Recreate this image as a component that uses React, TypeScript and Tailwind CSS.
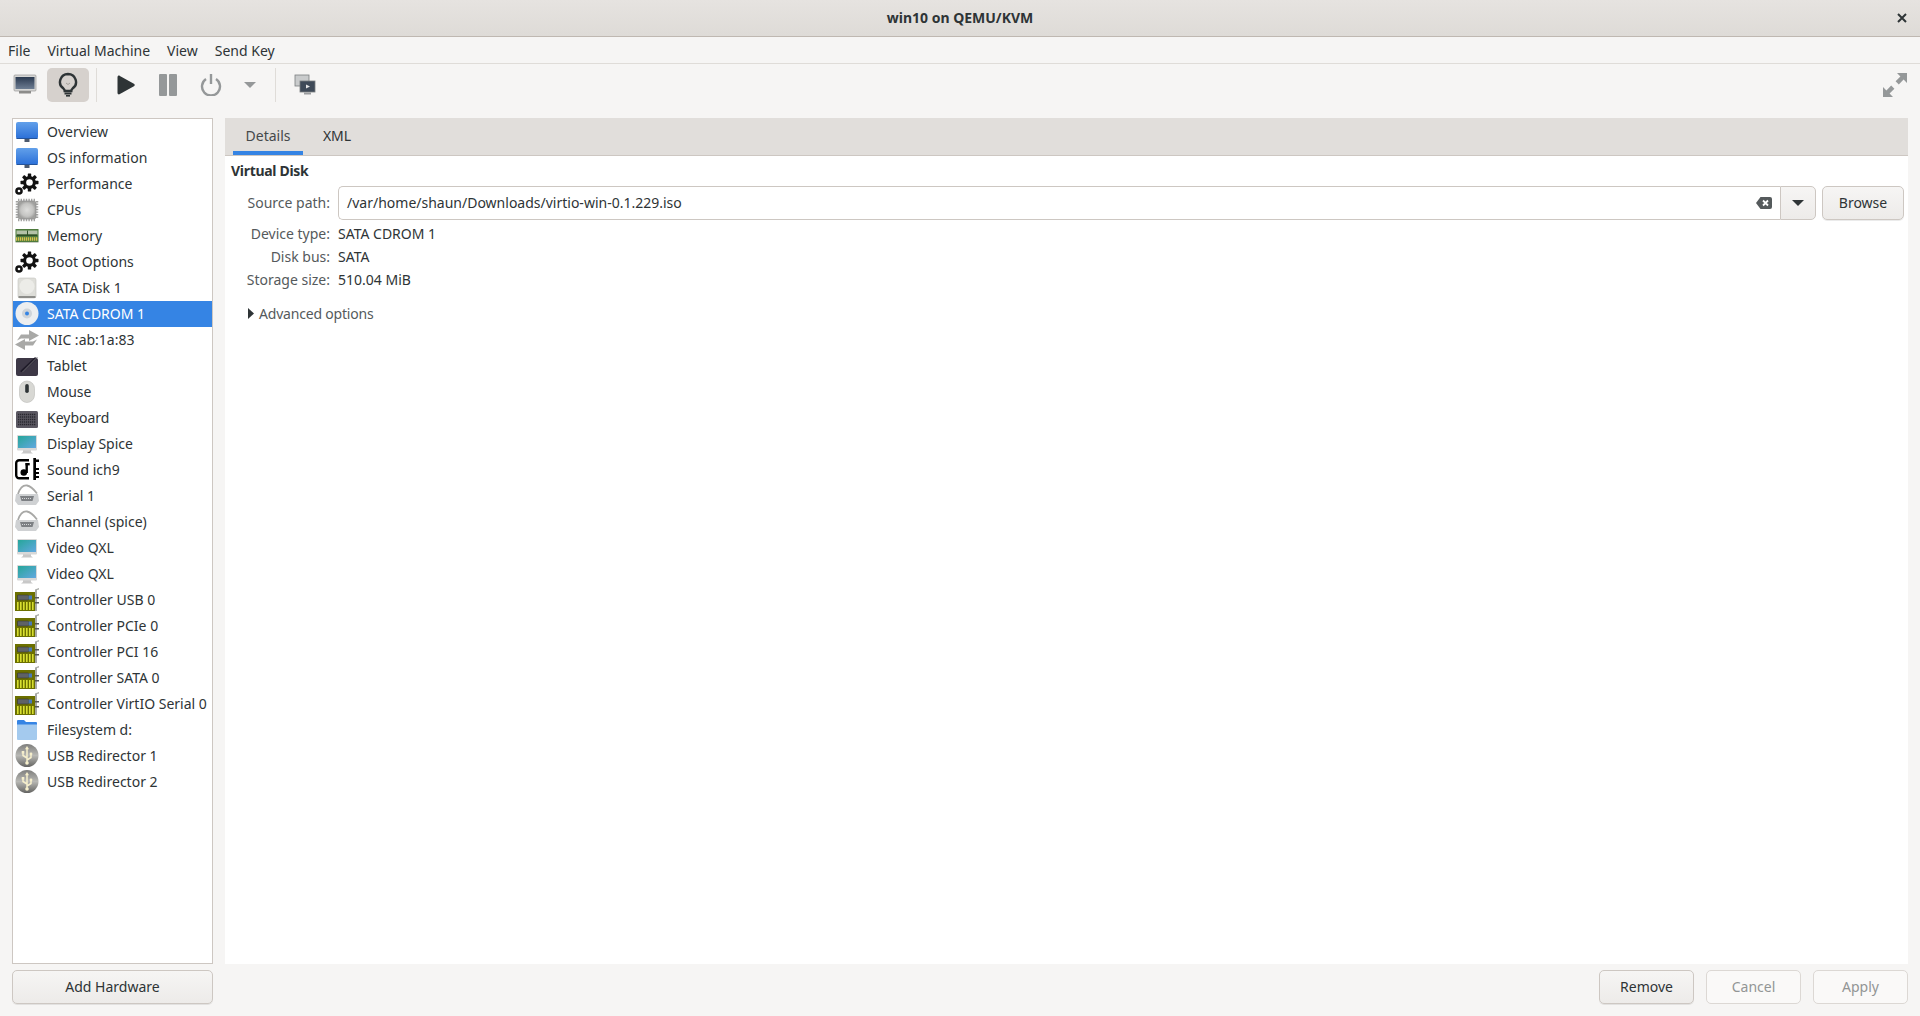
import React from 'react';

const Monitor = () => (
  <svg width="24" height="24" viewBox="0 0 24 24">
    <defs>
      <linearGradient id="blueScreen" x1="0" y1="0" x2="0" y2="1">
        <stop offset="0" stopColor="#62a0ea" />
        <stop offset="1" stopColor="#2a6fd8" />
      </linearGradient>
    </defs>
    <rect x="9.500" y="18" width="5" height="4" fill="#4d5a6e" />
    <rect x="1" y="2" width="22" height="17" rx="2" fill="url(#blueScreen)" />
    <rect x="1.500" y="18" width="21" height="1" fill="#24549c" />
  </svg>
);

const Gears = () => (
  <svg width="24" height="24" viewBox="0 0 24 24">
    <g fill="#111">
      <circle cx="14.500" cy="10.500" r="6.400" />
      {[0, 45, 90, 135].map((a) => (
        <rect key={a} x="12.800" y="1.500" width="3.400" height="18" rx="0.600" transform={`rotate(${a} 14.500 10.500)`} />
      ))}
      <circle cx="4" cy="19" r="3.800" />
    </g>
    <circle cx="14.500" cy="10.500" r="3.300" fill="#fff" />
    <circle cx="4" cy="19" r="1.300" fill="#fff" />
  </svg>
);

const Chip = () => (
  <svg width="24" height="24" viewBox="0 0 24 24">
    <defs>
      <radialGradient id="chip">
        <stop offset="0" stopColor="#dededc" />
        <stop offset="0.700" stopColor="#c4c4c2" />
        <stop offset="1" stopColor="#a0a09e" />
      </radialGradient>
    </defs>
    <g stroke="#a2a2a0" strokeWidth="2.500" strokeDasharray="1.400 1.200">
      <line x1="3" x2="21" y1="2" y2="2" />
      <line x1="3" x2="21" y1="22" y2="22" />
      <line x1="2" x2="2" y1="3" y2="21" />
      <line x1="22" x2="22" y1="3" y2="21" />
    </g>
    <rect x="3" y="3" width="18" height="18" rx="2.500" fill="url(#chip)" stroke="#8e8e8c" strokeWidth="0.700" />
  </svg>
);

const Ram = () => (
  <svg width="24" height="24" viewBox="0 0 24 24">
    <rect x="0.500" y="5" width="23" height="13" fill="#4d7a3c" />
    <rect x="1.500" y="6.500" width="21" height="4" fill="#b4c2a8" />
    <rect x="2" y="10.500" width="20" height="1.500" fill="#2f4f28" />
    <rect x="12" y="6.500" width="1" height="5" fill="#2f4f28" />
    <line x1="1" x2="23" y1="15" y2="15" stroke="#d8c24e" strokeWidth="3.400" strokeDasharray="1.300 0.700" />
    <rect x="0.500" y="18" width="23" height="1" fill="#c8ccc2" />
  </svg>
);

const HardDisk = () => (
  <svg width="24" height="24" viewBox="0 0 24 24">
    <rect x="3" y="2" width="18" height="20" rx="2" fill="#deded9" stroke="#c4c4c0" strokeWidth="0.600" />
    <circle cx="12" cy="10.500" r="7.500" fill="#ecece8" />
    <rect x="3.500" y="20" width="17" height="2" rx="0.500" fill="#8e8e8a" />
  </svg>
);

const Cdrom = () => (
  <svg width="24" height="24" viewBox="0 0 24 24">
    <circle cx="12" cy="11.500" r="11.500" fill="#eceef0" />
    <circle cx="12" cy="11.500" r="5" fill="#cfd4d9" />
    <circle cx="12" cy="11.500" r="2" fill="#3584e4" />
  </svg>
);

const Nic = () => (
  <svg width="24" height="24" viewBox="0 0 24 24" fill="#a9a9a7">
    <path d="M2 12.500 6 6.500h8V2l10 5.500L14 13v-2.500H6z" />
    <path d="M22 11.500l-4 6h-8V22L0 16.500 10 11v2.500h8z" />
  </svg>
);

const Tablet = () => (
  <svg width="24" height="24" viewBox="0 0 24 24">
    <rect x="1" y="4" width="22" height="18" rx="2" fill="#3d3846" />
    <path d="M6 18 21 4" stroke="#1f1b29" strokeWidth="2.600" />
    <path d="M7 18.500 22.500 3" stroke="#77767b" strokeWidth="0.900" />
  </svg>
);

const Mouse = () => (
  <svg width="24" height="24" viewBox="0 0 24 24">
    <rect x="4.500" y="1" width="15" height="21.500" rx="7.500" fill="#d8d8d4" stroke="#bcbcb8" strokeWidth="0.600" />
    <rect x="10.200" y="4" width="3.600" height="9" rx="1.800" fill="#2e3436" />
  </svg>
);

const Keyboard = () => (
  <svg width="24" height="24" viewBox="0 0 24 24">
    <rect x="1" y="5" width="22" height="17" rx="1.500" fill="#5b5862" />
    {[8.500, 11, 13.500, 16, 18.500].map((y) => (
      <line key={y} x1="3" x2="21" y1={y} y2={y} stroke="#2a2830" strokeWidth="1.600" strokeDasharray="1.300 0.700" />
    ))}
  </svg>
);

const Display = () => (
  <svg width="24" height="24" viewBox="0 0 24 24">
    <defs>
      <linearGradient id="teal" x1="0" y1="0" x2="1" y2="1">
        <stop offset="0" stopColor="#26a69a" />
        <stop offset="1" stopColor="#62a8e0" />
      </linearGradient>
    </defs>
    <path d="M8 17h8v3l2 1.500H6L8 20z" fill="#c8c8c8" />
    <rect x="2" y="3" width="20" height="15.500" rx="1" fill="#d8d8d8" />
    <rect x="3" y="4" width="18" height="12" fill="url(#teal)" />
  </svg>
);

const Sound = () => (
  <svg width="24" height="24" viewBox="0 0 24 24">
    <rect x="1.200" y="2.200" width="15.500" height="18" rx="3" fill="none" stroke="#000" strokeWidth="2.400" />
    <rect x="14" y="0" width="4.300" height="24" fill="#fff" />
    <rect x="18.300" y="0" width="2.700" height="22" fill="#000" />
    <rect x="21" y="1.500" width="3" height="2.500" fill="#000" />
    <rect x="21" y="10" width="3" height="2" fill="#000" />
    <rect x="21" y="14" width="3" height="2" fill="#000" />
    <rect x="21" y="18" width="3" height="2" fill="#000" />
    <rect x="10.500" y="5" width="2.400" height="10" fill="#000" />
    <rect x="10.500" y="5" width="4.200" height="2.400" fill="#000" />
    <circle cx="8.800" cy="14.500" r="3.300" fill="#000" />
  </svg>
);

const Serial = () => (
  <svg width="24" height="24" viewBox="0 0 24 24">
    <path d="M3 10C5 4 8 1 12 1.500c3 .4 7 4 10 8" fill="none" stroke="#a8a8a6" strokeWidth="1.800" />
    <path d="M1 10h22l1 7-3 4H3l-3-4z" fill="#cfd1d3" />
    <path d="M5 12h14l-1.500 5h-11z" fill="#7d8084" />
    <line x1="7" x2="17" y1="14.500" y2="14.500" stroke="#d6d8da" strokeWidth="1" strokeDasharray="1 1" />
  </svg>
);

const Pci = () => (
  <svg width="24" height="24" viewBox="0 0 24 24">
    <rect x="0" y="4" width="20" height="19" fill="#6c7000" />
    <rect x="2.500" y="7" width="11" height="5" rx="0.500" fill="#5e6266" stroke="#2c2c2c" strokeWidth="0.500" />
    <rect x="13.500" y="7.500" width="3.500" height="4" fill="#4a78b8" />
    {[2, 5, 8, 11, 14, 17].map((x) => (
      <rect key={x} x={x} y="14" width="1.600" height="8" fill="#d8df30" />
    ))}
    <path d="M20 1.500 24 0v1.500l-2 .5V23h-2z" fill="#a8aaa6" />
    <rect x="20" y="9" width="4" height="1.500" fill="#55575a" />
    <rect x="20" y="14" width="4" height="1.500" fill="#55575a" />
  </svg>
);

const Folder = () => (
  <svg width="24" height="24" viewBox="0 0 24 24">
    <path d="M2 3a1 1 0 0 1 1-1h6l2 2h10a1 1 0 0 1 1 1v3H2z" fill="#3584e4" />
    <path d="M2 6.500h20V21a1 1 0 0 1-1 1H3a1 1 0 0 1-1-1z" fill="#a4caee" />
  </svg>
);

const UsbDisc = () => (
  <svg width="24" height="24" viewBox="0 0 24 24">
    <defs>
      <linearGradient id="usbDisc" x1="0" y1="0" x2="0" y2="1">
        <stop offset="0" stopColor="#7e7e7c" />
        <stop offset="0.500" stopColor="#b8b8b4" />
        <stop offset="1" stopColor="#646462" />
      </linearGradient>
    </defs>
    <circle cx="12" cy="11.500" r="11.500" fill="url(#usbDisc)" />
    <path d="M12 4v14M12 14 8 11.500V9M12 16l4-2.500V11" fill="none" stroke="#f6efcc" strokeWidth="1.500" />
    <circle cx="12" cy="19" r="1.800" fill="#f6efcc" />
    <rect x="6.700" y="7" width="2.600" height="2.600" fill="#f6efcc" />
    <circle cx="16" cy="10" r="1.400" fill="#f6efcc" />
    <path d="M12 2l2 3.200h-4z" fill="#f6efcc" />
  </svg>
);

const devices: { label: string; icon: React.ReactNode }[] = [
  { label: 'Overview', icon: <Monitor /> },
  { label: 'OS information', icon: <Monitor /> },
  { label: 'Performance', icon: <Gears /> },
  { label: 'CPUs', icon: <Chip /> },
  { label: 'Memory', icon: <Ram /> },
  { label: 'Boot Options', icon: <Gears /> },
  { label: 'SATA Disk 1', icon: <HardDisk /> },
  { label: 'SATA CDROM 1', icon: <Cdrom /> },
  { label: 'NIC :ab:1a:83', icon: <Nic /> },
  { label: 'Tablet', icon: <Tablet /> },
  { label: 'Mouse', icon: <Mouse /> },
  { label: 'Keyboard', icon: <Keyboard /> },
  { label: 'Display Spice', icon: <Display /> },
  { label: 'Sound ich9', icon: <Sound /> },
  { label: 'Serial 1', icon: <Serial /> },
  { label: 'Channel (spice)', icon: <Serial /> },
  { label: 'Video QXL', icon: <Display /> },
  { label: 'Video QXL', icon: <Display /> },
  { label: 'Controller USB 0', icon: <Pci /> },
  { label: 'Controller PCIe 0', icon: <Pci /> },
  { label: 'Controller PCI 16', icon: <Pci /> },
  { label: 'Controller SATA 0', icon: <Pci /> },
  { label: 'Controller VirtIO Serial 0', icon: <Pci /> },
  { label: 'Filesystem d:', icon: <Folder /> },
  { label: 'USB Redirector 1', icon: <UsbDisc /> },
  { label: 'USB Redirector 2', icon: <UsbDisc /> },
];

const details = [
  { label: 'Device type:', value: 'SATA CDROM 1' },
  { label: 'Disk bus:', value: 'SATA' },
  { label: 'Storage size:', value: '510.04 MiB' },
];

const gtkButton =
  'h-[34px] pb-[2px] flex items-center justify-center rounded-[5px] border border-[#cdc7c2] bg-gradient-to-b from-[#f6f5f4] to-[#edebe9] shadow-[0_1px_0_rgba(0,0,0,0.08)]';
const disabledButton =
  'w-[95px] h-[34px] pb-[2px] flex items-center justify-center rounded-[5px] border border-[#dcd8d4] bg-[#faf9f8] text-[#929595]';

export default function App() {
  return (
    <div className="w-[1920px] h-[1016px] flex flex-col overflow-hidden bg-[#f6f5f4] text-[#2e3436] text-[14px] font-['Noto_Sans',sans-serif]">
      {/* Title bar */}
      <div className="h-[37px] shrink-0 pb-[2px] flex items-center justify-center relative border-b border-[#bfb8b1] bg-gradient-to-b from-[#e6e3e0] to-[#dedbd7]">
        <span className="font-bold">win10 on QEMU/KVM</span>
        <svg className="absolute right-[13px] top-[13px]" width="10" height="10" viewBox="0 0 10 10">
          <path d="M1 1l8 8M9 1l-8 8" stroke="#2e3436" strokeWidth="2" />
        </svg>
      </div>

      {/* Menu bar */}
      <div className="h-[27px] shrink-0 flex items-center gap-[17px] pl-[8px] border-b border-[#dfdcd8]">
        <span>File</span>
        <span>Virtual Machine</span>
        <span>View</span>
        <span>Send Key</span>
      </div>

      {/* Toolbar */}
      <div className="h-[54px] shrink-0 flex items-center px-[12px] pb-[12px]">
        <div className="w-[26px] flex justify-center">
          <svg width="24" height="22" viewBox="0 0 24 22">
            <defs>
              <linearGradient id="tbScreen" x1="0" y1="0" x2="0" y2="1">
                <stop offset="0" stopColor="#2b3a50" />
                <stop offset="1" stopColor="#6d7d92" />
              </linearGradient>
            </defs>
            <rect x="1" y="1" width="22" height="16" rx="1" fill="#d6d6d4" stroke="#9a9a98" strokeWidth="0.700" />
            <rect x="2.500" y="3" width="19" height="12" fill="url(#tbScreen)" />
            <rect x="6" y="17" width="12" height="2.500" fill="#8c8c8a" />
          </svg>
        </div>
        <div className="ml-[9px] w-[42px] h-[34px] rounded-[5px] bg-[#d6d1cd] flex items-center justify-center">
          <svg width="20" height="26" viewBox="0 0 20 26">
            <path d="M10 2a8 8 0 0 0-4.500 14.600c.8.600 1.200 1.300 1.200 2.400h6.600c0-1.100.4-1.800 1.200-2.400A8 8 0 0 0 10 2z" fill="none" stroke="#2e3436" strokeWidth="2.400" />
            <path d="M8 11l2 1.500L12 11" fill="none" stroke="#a5a19c" strokeWidth="1" />
            <rect x="6.500" y="20.500" width="7" height="2" fill="#2e3436" />
            <rect x="8" y="23" width="4" height="1.600" fill="#2e3436" />
          </svg>
        </div>
        <div className="ml-[7px] w-px h-[34px] bg-[#dfdcd8]" />
        <div className="ml-[18px] w-[22px] flex justify-center">
          <svg width="20" height="22" viewBox="0 0 20 22">
            <path d="M1.500 3.200c0-1.300 1.300-2 2.400-1.300l14 7.800c1.100.6 1.100 2 0 2.600l-14 7.800c-1.100.7-2.400 0-2.400-1.300z" fill="#2e3436" />
          </svg>
        </div>
        <div className="ml-[22px] flex gap-[2px]">
          <div className="w-[8px] h-[22px] rounded-[1px] bg-[#959899]" />
          <div className="w-[8px] h-[22px] rounded-[1px] bg-[#959899]" />
        </div>
        <div className="ml-[23px] w-[22px] flex justify-center">
          <svg width="22" height="22" viewBox="0 0 22 22" fill="none" stroke="#959899" strokeWidth="2.400">
            <path d="M6 5a9 9 0 1 0 10 0" />
            <path d="M11 0v10" />
          </svg>
        </div>
        <div className="ml-[22px] w-[12px] flex justify-center">
          <svg width="12" height="6" viewBox="0 0 12 6">
            <path d="M0 0h12L6 6z" fill="#959899" />
          </svg>
        </div>
        <div className="ml-[19px] w-px h-[34px] bg-[#dfdcd8]" />
        <div className="ml-[18px]">
          <svg width="22" height="22" viewBox="0 0 22 22">
            <rect x="1" y="1" width="14" height="11" fill="#c9cbcc" stroke="#7b7e80" strokeWidth="0.800" />
            <rect x="6" y="7" width="15" height="11" fill="#3f4a58" stroke="#7b7e80" strokeWidth="0.800" />
            <path d="M12 10.500l4 2-4 2z" fill="#e6e6e6" />
            <rect x="10" y="18.500" width="7" height="2" fill="#9a9c9e" />
          </svg>
        </div>
        <div className="ml-auto mr-[1px]">
          <svg width="24" height="24" viewBox="0 0 24 24" fill="#959899">
            <path d="M14 0h10v10l-3.400-3.400-4.800 4.800-3.200-3.200 4.800-4.800z" />
            <path d="M0 24V14l3.400 3.400 4.800-4.800 3.200 3.200-4.800 4.800L10 24z" />
          </svg>
        </div>
      </div>

      {/* Main */}
      <div className="flex-1 min-h-0 flex gap-[12px] px-[12px]">
        <div className="w-[201px] flex flex-col">
          <div className="flex-1 border border-[#cdc7c2] bg-white">
            {devices.map((d, i) => {
              const selected = d.label === 'SATA CDROM 1';
              return (
                <div
                  key={i}
                  className={selected ? 'h-[26px] flex items-center bg-[#3584e4] text-white' : 'h-[26px] flex items-center'}
                >
                  <div className="w-[24px] ml-[2px] flex justify-center shrink-0">{d.icon}</div>
                  <span className="ml-[8px] pb-[2px] whitespace-nowrap">{d.label}</span>
                </div>
              );
            })}
          </div>
          <div className={`${gtkButton} mt-[6px] mb-[12px]`}>Add Hardware</div>
        </div>

        <div className="flex-1 flex flex-col min-w-0">
          <div className="flex-1 bg-white">
            <div className="h-[38px] bg-[#e1dedb] border-b border-[#cdc7c2] flex pl-[8px]">
              <div className="w-[70px] h-[37px] flex items-center justify-center border-b-[4px] border-[#3584e4] pt-[2px] text-[#45494b]">Details</div>
              <div className="w-[68px] h-[37px] pb-[2px] flex items-center justify-center">XML</div>
            </div>
            <div className="pl-[6px] pr-[4px] pt-[5px]">
              <div className="font-bold h-[18px] flex items-center tracking-[-0.3px]">Virtual Disk</div>
              <div className="mt-[7px] flex items-center">
                <div className="w-[99px] pb-[2px] text-right text-[#555a5c]">Source path:</div>
                <div className="ml-[8px] flex-1 h-[34px] pb-[2px] flex items-center rounded-l-[5px] border border-[#cdc7c2] border-r-0 pl-[8px] pr-[8px]">
                  <span className="flex-1">/var/home/shaun/Downloads/virtio-win-0.1.229.iso</span>
                  <svg width="16" height="12" viewBox="0 0 16 12" className="mt-[2px]">
                    <path d="M4.500 0H14a2 2 0 0 1 2 2v8a2 2 0 0 1-2 2H4.500L0 6z" fill="#555a5c" />
                    <path d="M7 3.500l5 5M12 3.500l-5 5" stroke="#fff" strokeWidth="1.800" />
                  </svg>
                </div>
                <div className="w-[36px] h-[34px] flex items-center justify-center rounded-r-[5px] border border-[#cdc7c2] bg-gradient-to-b from-[#f6f5f4] to-[#edebe9]">
                  <svg width="12" height="6" viewBox="0 0 12 6">
                    <path d="M0 0h12L6 6z" fill="#2e3436" />
                  </svg>
                </div>
                <div className={`${gtkButton} ml-[6px] w-[82px]`}>Browse</div>
              </div>
              <div className="mt-[2px]">
                {details.map((r) => (
                  <div key={r.label} className="h-[23px] flex items-center">
                    <div className="w-[99px] text-right text-[#555a5c]">{r.label}</div>
                    <div className="ml-[8px]">{r.value}</div>
                  </div>
                ))}
              </div>
              <div className="mt-[12px] h-[20px] flex items-center pl-[17px] text-[#555a5c] tracking-[-0.2px]">
                <svg width="6" height="11" viewBox="0 0 6 11" className="mr-[5px]">
                  <path d="M0 0l6 5.500L0 11z" fill="#2e3436" />
                </svg>
                Advanced options
              </div>
            </div>
          </div>
          <div className="flex justify-end gap-[12px] pt-[6px] pb-[12px]">
            <div className={`${gtkButton} w-[95px]`}>Remove</div>
            <div className={disabledButton}>Cancel</div>
            <div className={disabledButton}>Apply</div>
          </div>
        </div>
      </div>
    </div>
  );
}
